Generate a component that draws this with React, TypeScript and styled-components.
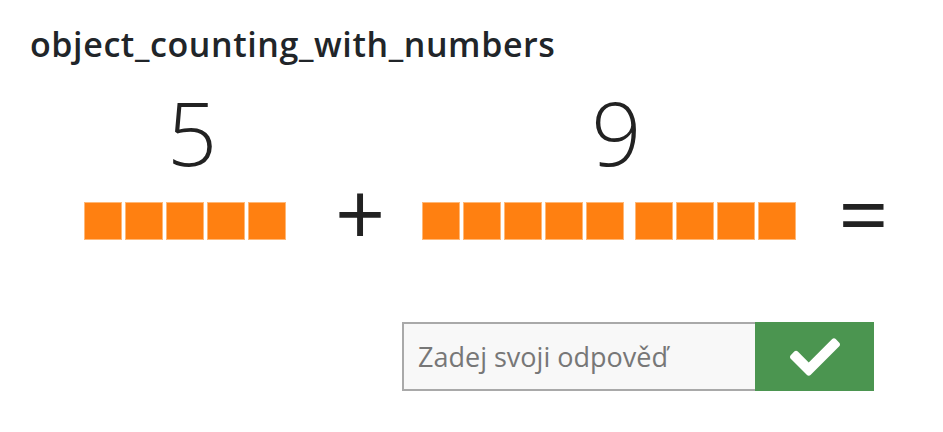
import React from "react";
import styled, { createGlobalStyle } from "styled-components";
import { FaCheck } from "react-icons/fa";

const Global = createGlobalStyle`
  html, body { margin: 0; padding: 0; background: #ffffff; }
  body { font-family: "Open Sans", "Noto Sans", sans-serif; color: #212529; }
`;

const Page = styled.div`
  width: 943px;
  height: 432px;
  padding: 0 0 0 30px;
  box-sizing: border-box;
  overflow: hidden;
`;

const Title = styled.h1`
  margin: 0;
  padding-top: 22px;
  font-size: 34px;
  line-height: 44px;
  font-weight: 600;
  letter-spacing: 0.6px;
  color: #212529;
`;

const Equation = styled.div`
  display: flex;
  align-items: flex-end;
  margin-top: 22px;
  padding-left: 54px;
`;

const Operand = styled.div`
  display: flex;
  flex-direction: column;
  align-items: center;
`;

const Digit = styled.div`
  font-size: 88px;
  line-height: 88px;
  font-weight: 300;
  color: #222;
  margin-bottom: 26px;
  padding-left: 14px;
`;

const Blocks = styled.div`
  display: flex;
  gap: 11px;
`;

const Group = styled.div`
  display: flex;
  gap: 3px;
`;

const Square = styled.div`
  width: 38px;
  height: 38px;
  box-sizing: border-box;
  background: #ff8011;
  border: 1px solid #ffb877;
`;

const Operator = styled.div<{ $gapL: number; $gapR: number }>`
  font-size: 88px;
  line-height: 38px;
  height: 38px;
  font-weight: 400;
  color: #222;
  margin-left: ${(p) => p.$gapL}px;
  margin-right: ${(p) => p.$gapR}px;
  position: relative;
  top: -9px;
`;

const AnswerRow = styled.div`
  display: flex;
  margin-top: 82px;
  padding-left: 372px;
`;

const Input = styled.input`
  width: 353px;
  height: 69px;
  box-sizing: border-box;
  border: 2px solid #a9a9a9;
  border-right: none;
  background: #f8f8f8;
  padding: 0 0 0 14px;
  font-family: "Open Sans", "Noto Sans", sans-serif;
  font-size: 27px;
  color: #333;
  outline: none;
  &::placeholder { color: #777; }
`;

const Submit = styled.button`
  width: 119px;
  height: 69px;
  border: none;
  background: #4b9550;
  color: #fff;
  display: flex;
  align-items: center;
  justify-content: center;
  padding: 0;
  cursor: pointer;
`;

function Count({ n }: { n: number }) {
  const groups: number[] = [];
  let left = n;
  while (left > 0) {
    groups.push(Math.min(5, left));
    left -= 5;
  }
  return (
    <Blocks>
      {groups.map((g, i) => (
        <Group key={i}>
          {Array.from({ length: g }).map((_, j) => (
            <Square key={j} />
          ))}
        </Group>
      ))}
    </Blocks>
  );
}

export default function App() {
  return (
    <>
      <Global />
      <Page>
        <Title>object_counting_with_numbers</Title>
        <Equation>
          <Operand>
            <Digit>5</Digit>
            <Count n={5} />
          </Operand>
          <Operator $gapL={49} $gapR={37}>+</Operator>
          <Operand>
            <Digit>9</Digit>
            <Count n={9} />
          </Operand>
          <Operator $gapL={42} $gapR={0}>=</Operator>
        </Equation>
        <AnswerRow>
          <Input autoFocus placeholder="Zadej svoji odpověď" />
          <Submit aria-label="check">
            <FaCheck size={50} />
          </Submit>
        </AnswerRow>
      </Page>
    </>
  );
}
